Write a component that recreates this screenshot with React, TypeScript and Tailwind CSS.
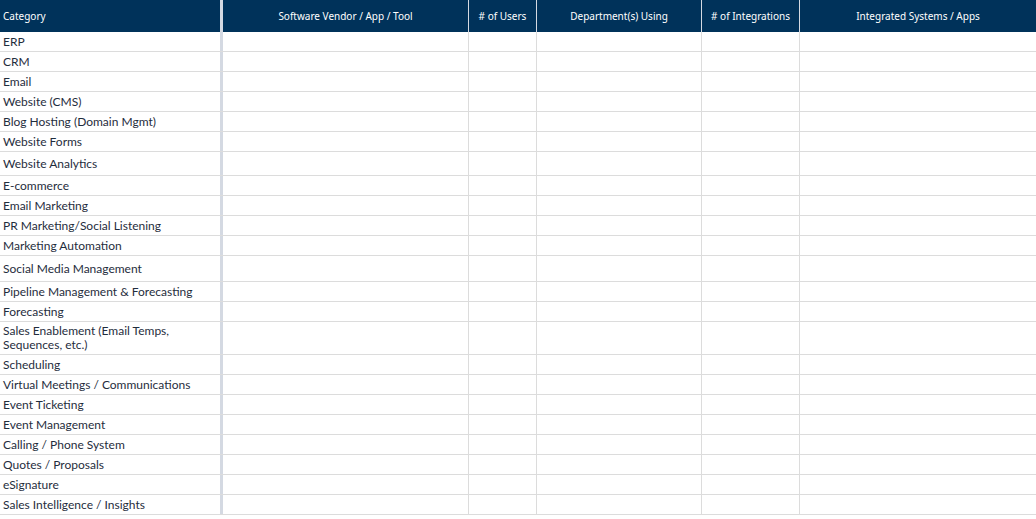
const rows: [string, number][] = [
  ['ERP', 20], ['CRM', 20], ['Email', 20], ['Website (CMS)', 20], ['Blog Hosting (Domain Mgmt)', 20],
  ['Website Forms', 20], ['Website Analytics', 24], ['E-commerce', 20], ['Email Marketing', 20],
  ['PR Marketing/Social Listening', 20], ['Marketing Automation', 20], ['Social Media Management', 26],
  ['Pipeline Management & Forecasting', 20], ['Forecasting', 20], ['Sales Enablement (Email Temps, Sequences, etc.)', 33],
  ['Scheduling', 20], ['Virtual Meetings / Communications', 20], ['Event Ticketing', 20], ['Event Management', 20],
  ['Calling / Phone System', 20], ['Quotes / Proposals', 20], ['eSignature', 20], ['Sales Intelligence / Insights', 20],
];

const cols = ['Software Vendor / App / Tool', '# of Users', 'Department(s) Using', '# of Integrations', 'Integrated Systems / Apps'];
const widths = ['w-[246px]', 'w-[68px]', 'w-[165px]', 'w-[98px]', 'flex-1'];

export default function App() {
  return (
    <div className="w-[1036px] h-[519px] overflow-hidden bg-white text-[#1f2d3d]" style={{ fontFamily: 'Lato, "Noto Sans", sans-serif' }}>
      <div className="flex h-8 bg-[#00325a] text-white text-[10px]" style={{ fontFamily: '"Noto Sans", sans-serif' }}>
        <div className="w-[220px] pl-[3px] flex items-center">Category</div>
        <div className="w-[3px] bg-[#d4d9e2]" />
        {cols.map((c, i) => (
          <div key={c} className={`${widths[i]} flex items-center justify-center ${i < 4 ? 'border-r border-[#d4d9e2]' : ''}`}>{c}</div>
        ))}
      </div>
      {rows.map(([name, h]) => (
        <div key={name} className="flex border-b border-[#dcdcdc]" style={{ height: h }}>
          <div className="w-[220px] pl-[3px] flex items-center text-[12px] leading-[14px]">
            <span className={h === 33 ? 'max-w-[185px]' : 'whitespace-nowrap'}>{name}</span>
          </div>
          <div className="w-[3px] bg-[#d4d9e2]" />
          {widths.map((w, i) => (
            <div key={i} className={`${w} ${i < 4 ? 'border-r border-[#dcdcdc]' : ''}`} />
          ))}
        </div>
      ))}
    </div>
  );
}
